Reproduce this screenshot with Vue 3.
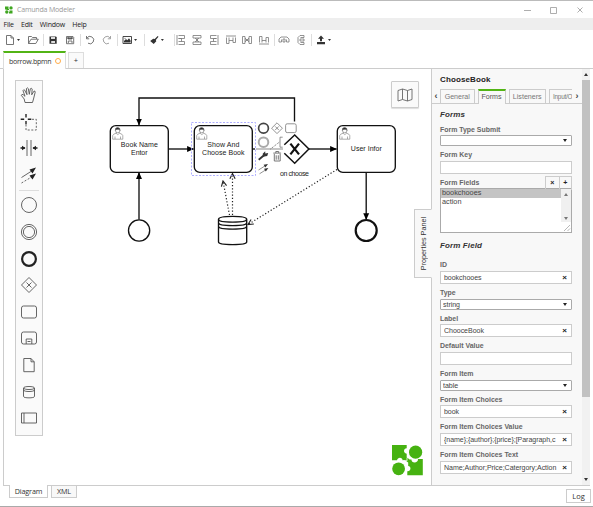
<script setup>
import { ref } from 'vue'

const menus = ['File', 'Edit', 'Window', 'Help']
const bars = {
  left: 'M2 1V11M3.5 1.5H9.5V4.5H3.5M3.5 7.5H9.5V10.5H3.5M3.5 4.5H6.5V7.5',
  center: 'M2 1.5H10V4H2ZM2 8H10V10.5H2ZM6 4V8M4 4L8 8M8 4L4 8',
  right: 'M10 1V11M8.5 1.5H2.5V4.5H8.5M8.5 7.5H2.5V10.5H8.5M8.5 4.5H5.5V7.5',
  top: 'M1 2H11M1.5 3.5V9.5H4V3.5M4 6.5H8M8 3.5V8.5H10.5V3.5',
  middle: 'M1.5 2.5V9.5H4V2.5ZM8 2.5V9.5H10.5V2.5ZM4 6H8M4 4L8 8M8 4L4 8',
  bottom: 'M1 10H11M1.5 8.5V2.5H4V8.5M4 6.5H8M8 8.5V3.5H10.5V8.5',
  spreadH: 'M1 8V5L3 3H9L11 5V8H8.5V5.5M3.5 8V5.5M1 8H3.5M5 8V5H7V8Z',
  spreadV: 'M9 1.5H5L3 3.5V8.5L5 10.5H9V8.5H5.5M9 3.5H5.5M9 1.5V3.5M9 5H5V7H9Z',
}
const aligns = ['left', 'center', 'right', 'top', 'middle', 'bottom']
const spreads = ['spreadH', 'spreadV']
const tabs = ['General', 'Forms', 'Listeners', 'Input/O']
const active = ref('Forms')
const selected = ref('bookchooes')
const fieldList = ['bookchooes', 'action']
const topFields = [
  { label: 'Form Type Submit', kind: 'select', value: '' },
  { label: 'Form Key', kind: 'text', value: '' },
]
const fields = [
  { label: 'ID', kind: 'text', value: 'bookchooes' },
  { label: 'Type', kind: 'select', value: 'string' },
  { label: 'Label', kind: 'text', value: 'ChooceBook' },
  { label: 'Default Value', kind: 'text', value: '' },
  { label: 'Form Item', kind: 'select', value: 'table' },
  { label: 'Form Item Choices', kind: 'text', value: 'book' },
  { label: 'Form Item Choices Value', kind: 'text', value: '{name};{author};{price};[Paragraph,c' },
  { label: 'Form Item Choices Text', kind: 'text', value: 'Name;Author;Price;Catergory;Action' },
]
const tasks = [
  { x: 110, lines: [['Book Name', 37], ['Entor', 16.5]] },
  { x: 194, lines: [['Show And', 32], ['Choose Book', 42.5]] },
  { x: 337, lines: [['User Infor', 31]] },
]
</script>

<template>
  <div class="window">
    <header class="titlebar">
      <svg class="app-logo" viewBox="0 0 8 8"><path d="M0 .5H3.5V3H4V4H2L1 3.5H0ZM4.4 4.5H7.5V7.6H4V6H4.5Z" /><circle cx="6" cy="1.9" r="1.7" /><circle cx="1.8" cy="6" r="1.7" /></svg>
      <span class="app-name">Camunda Modeler</span>
      <svg class="controls" viewBox="0 0 60 10"><path d="M0 5.5H7M26.5 2.5H32.5V8.5H26.5ZM53.5 2.5L58.5 7.5M58.5 2.5L53.5 7.5" /></svg>
    </header>
    <nav class="menubar"><span v-for="m in menus" :key="m">{{ m }}</span></nav>
    <div class="toolbar">
      <div class="group">
        <svg class="tool" viewBox="0 0 12 12"><path d="M2.5 1.5H7L9.5 4V10.5H2.5ZM7 1.5V4H9.5" /></svg>
        <i class="caret"></i>
        <svg class="tool gap" viewBox="0 0 12 12"><path d="M1.5 9.5V2.5H4.5L5.5 3.5H9.5V5M1.5 9.5L4 5.2H11.3L8.8 9.5Z" /></svg>
      </div>
      <div class="group">
        <svg class="tool dark" viewBox="0 0 12 12"><path class="fill" d="M2.5 2.5H9L9.7 3.2V9.7H2.5Z" /><path class="paper" d="M4 3H8V5H4ZM4.2 7H8V9H4.2Z" /></svg>
        <svg class="tool" viewBox="0 0 12 12"><path d="M2.5 2.5H9L9.7 3.2V9.7H2.5ZM4 3V5H8V3M4.3 9V7H8V9" /><path class="fill" d="M3.5 3.5H8.5V4.7H3.5Z" /></svg>
      </div>
      <div class="group">
        <svg class="tool" viewBox="0 0 12 12"><path d="M2.8 4.2A3.7 3.7 0 1 1 4 9.2M2.5 2V4.8H5.2" /></svg>
        <svg class="tool faded" viewBox="0 0 12 12"><path d="M9.2 4.2A3.7 3.7 0 1 0 8 9.2M9.5 2V4.8H6.8" /></svg>
      </div>
      <div class="group wide">
        <svg class="tool dark" viewBox="0 0 12 12"><path d="M2 2.5H10.5V9.5H2Z" /><path class="fill" d="M3 8.5V7L5 5L6.3 6.3L8 4.3L9.6 6.4V8.5Z" /><circle class="fill" cx="4" cy="4.3" r=".5" /></svg>
        <i class="caret"></i>
      </div>
      <div class="group wider">
        <svg class="tool dark" viewBox="0 0 12 12"><path class="fill" d="M9.7 2L10.5 2.8L7.8 6L8.3 7.2L5.7 10L2.2 7L5.2 4.7L6.7 5Z" /></svg>
        <i class="caret"></i>
      </div>
      <div class="group tight">
        <svg v-for="a in aligns" :key="a" class="tool thin" viewBox="0 0 12 12"><path :d="bars[a]" /></svg>
      </div>
      <div class="group">
        <svg v-for="a in spreads" :key="a" class="tool thin" viewBox="0 0 12 12"><path :d="bars[a]" /></svg>
      </div>
      <div class="group last">
        <svg class="tool dark" viewBox="0 0 12 12"><path class="fill" d="M6 1.5L9 4.8H7V7.2H5V4.8H3ZM2 8H10V10.2H2Z" /></svg>
        <i class="caret"></i>
      </div>
    </div>
    <div class="file-tabs">
      <div class="file-tab">borrow.bpmn<i class="dirty"></i></div>
      <div class="add-tab">+</div>
    </div>

    <main class="workspace">
      <section class="canvas">
        <svg class="diagram" viewBox="4 69 427 416">
          <defs>
            <marker id="solid" viewBox="0 0 8 8" refX="7.5" refY="4" markerWidth="6.8" markerHeight="6.8" markerUnits="userSpaceOnUse" orient="auto"><path d="M0 .5L8 4L0 7.5Z" /></marker>
            <marker id="open" viewBox="0 0 8 8" refX="7" refY="4" markerWidth="7" markerHeight="7" markerUnits="userSpaceOnUse" orient="auto"><path d="M1 1L7 4L1 7" fill="none" stroke="#222" stroke-width="1.3" /></marker>
          </defs>
          <g class="flow">
            <path d="M294.5 121.5V98H139V125" marker-end="url(#solid)" />
            <path d="M139 219.5V172.5" marker-end="url(#solid)" />
            <path d="M168.5 149H193.5" marker-end="url(#solid)" />
            <path d="M309 149H336.5" marker-end="url(#solid)" />
            <path d="M366.2 172.5V219.5" marker-end="url(#solid)" />
            <path class="pale" d="M256 149H283" />
            <path d="M252 149H255" />
          </g>
          <g class="assoc">
            <path d="M229.5 215L223 181" marker-end="url(#open)" />
            <path d="M232.5 215V173.5" marker-end="url(#open)" />
            <path d="M337 169.5L248 224.5" marker-end="url(#open)" />
          </g>
          <rect class="selection" x="191.5" y="122.5" width="64" height="53" />
          <g v-for="t in tasks" :key="t.x">
            <rect class="task" :x="t.x + .3" y="125.6" width="58" height="46.8" rx="5.5" />
            <g class="user" :transform="`translate(${t.x + 2} 127)`">
              <path d="M.7 12.2V8.6Q1.2 7 4 6.2Q6 9 7.5 6.2Q10.5 7 10.8 8.6V12.2ZM3 12V9.5M8.5 12V9.5M4 6.2L4.4 5.1M7.5 6.2L7 5.1" />
              <circle cx="5.7" cy="3.4" r="2.3" /><path class="hair" d="M3.4 3.5Q2.8 .7 5.5 .6Q8.5 .6 8 3.6L7.3 2.5L5.4 2.4L4.2 2.7Z" />
            </g>
            <text v-for="(l, i) in t.lines" :key="l[0]" class="label" :x="t.x + 29.3" :y="(t.lines.length > 1 ? 147.3 : 151.2) + i * 8" :textLength="l[1]">{{ l[0] }}</text>
          </g>
          <circle class="event" cx="139.1" cy="230.5" r="10.6" />
          <circle class="event end" cx="366.2" cy="230.5" r="10.5" />
          <path class="event" d="M218.5 219.2C218.5 215.4 246.7 215.4 246.7 219.2V242C246.7 245.5 218.5 245.5 218.5 242ZM218.5 219.2C218.5 223 246.7 223 246.7 219.2M218.5 222.8C218.5 226.6 246.7 226.6 246.7 222.8M218.5 226.3C218.5 230.1 246.7 230.1 246.7 226.3" />
          <path class="event gateway" d="M284.3 144.7L294.7 135L308.9 149L294.7 163.2L284.3 153.3" />
          <path class="cross" d="M290.4 143.6L299 154.4M299 143.6L290.4 154.4" />
          <text class="label" x="294.4" y="175.9" textLength="29">on choose</text>

          <g class="pad">
            <circle class="pad-end" cx="263.5" cy="128.3" r="4.9" />
            <path d="M277 122.8L282.4 128.2L277 133.6L271.6 128.2ZM275.2 126.4L278.8 130M278.8 126.4L275.2 130" />
            <rect x="285.6" y="123.8" width="10.6" height="8.8" rx="1.6" />
            <circle class="pad-mid" cx="263.5" cy="142.2" r="4.8" />
            <path d="M282.7 137.2H280V147.2H282.7" /><path class="dots" d="M270.5 149L279.5 142" />
            <path class="wrench" d="M258.7 159.8L264 155.2" /><path class="wrench-head" d="M263 156.8L262.7 153.7L265.2 151.3L265.3 153.5L268.2 153.1L267.2 156.1Z" />
            <path class="bin" d="M273.3 153.1H281.1M275.8 153V151.5H278.7V153M274.3 154V161H280.2V154M276.2 155.3V159.7M278.3 155.3V159.7" />
            <path d="M258.5 170L266.3 165.1M259.5 173.8L266.8 169.2" /><path class="wrench-head" d="M263.6 164.8L268 164L265.4 167.4ZM264 168.8L268.4 168L265.8 171.5Z" />
          </g>
          <g class="bpmn-logo">
            <path d="M392 445H406.7V448.2C403.7 448 402.7 453 406.7 453.7V457L409.5 459.5H411.5C411 463.5 418.5 463.5 418 459H422.8V475.2H407.3V471.2C411 471.5 411.7 466.5 408.2 466V462.5L405 460.3H402.5C403 457 397.4 456.5 397 460.3H392Z" />
            <circle cx="415.6" cy="452.2" r="6.6" /><circle cx="398.6" cy="468.8" r="6.4" />
          </g>
          <path class="logo-seam" d="M403 460.8H407V457.5H410" />
        </svg>

        <aside class="palette">
          <svg viewBox="0 0 20 20"><path d="M6 17.5L5.2 14L2.3 10.3Q2.7 8.8 4.2 9.7L6 11.3L4 5.6Q4.6 4.2 5.7 5.1L8 9.7L7.4 3.6Q8.5 2.1 9.3 3.6L10.3 9.3L11.3 3.8Q12.6 2.6 13.2 4.1L12.7 9.8L15 6.1Q16.4 5.8 16.2 7.2L14.5 14L13.5 17.5Z" /></svg>
          <svg viewBox="0 0 20 20"><path class="heavy" d="M7 2V5.5M7 9V12.5M1.7 7.3H5.2M8.8 7.3H12.3" /><path class="dash" d="M13 7.3H17.3V18H7V13" /></svg>
          <svg viewBox="0 0 20 20"><path d="M8 2V18M12 2V18" /><path class="heavy" d="M1.5 10H6M14 10H18.5" /><path class="solid" d="M3 7.7L6.5 10L3 12.3ZM17 7.7L13.5 10L17 12.3Z" /></svg>
          <svg viewBox="0 0 20 20"><path d="M2.5 12.5L13 5.8" /><path class="dash" d="M2.5 18L13 11.8" /><path class="solid" d="M10.5 4.5L17 2.5L13.5 8.6ZM10.5 10.5L17 8.5L13.5 14.5Z" /></svg>
          <hr />
          <svg viewBox="0 0 20 20"><circle cx="10" cy="10" r="7.5" /></svg>
          <svg viewBox="0 0 20 20"><circle cx="10" cy="10" r="7.6" /><circle cx="10" cy="10" r="5.6" /></svg>
          <svg viewBox="0 0 20 20"><circle class="ring" cx="10" cy="10" r="6.9" /></svg>
          <svg viewBox="0 0 20 20"><path d="M10 2.5L17.5 10L10 17.5L2.5 10ZM7.5 7.5L12.5 12.5M12.5 7.5L7.5 12.5" /></svg>
          <svg viewBox="0 0 20 20"><rect x="2.5" y="4" width="15" height="12" rx="2" /></svg>
          <svg viewBox="0 0 20 20"><rect x="2.5" y="4" width="15" height="12" rx="2" /><path d="M7.2 16V11H12.8V16M8.5 13.5H11.5" /></svg>
          <svg viewBox="0 0 20 20"><path d="M4.8 3.5H12L15.2 6.8V16.7H4.8ZM12 3.5V6.8H15.2" /></svg>
          <svg viewBox="0 0 20 20"><path d="M4.5 6C4.5 4 15.5 4 15.5 6V14.5C15.5 16.3 4.5 16.3 4.5 14.5ZM4.5 6C4.5 8 15.5 8 15.5 6M4.5 8C4.5 10 15.5 10 15.5 8" /></svg>
          <svg viewBox="0 0 20 20"><path d="M2.5 5H17.5V15H2.5ZM5 5V15" /></svg>
        </aside>
        <button class="minimap"><svg viewBox="0 0 16 14"><path d="M1 2.5L5.5 1L10.5 2.5L15 1V11.5L10.5 13L5.5 11.5L1 13ZM5.5 1V11.5M10.5 2.5V13" /></svg></button>
        <div class="panel-toggle"><span>Properties Panel</span></div>
      </section>

      <aside class="panel">
        <div class="panel-body">
          <h1>ChooseBook</h1>
          <div class="tabs">
            <span class="scroll prev">‹</span>
            <button v-for="t in tabs" :key="t" class="tab" :class="{ active: t === active }" @click="active = t">{{ t }}</button>
            <span class="scroll next">›</span>
          </div>
          <div class="form">
            <h2>Forms</h2>
            <div v-for="f in topFields" :key="f.label" class="field" :class="f.kind">
              <label>{{ f.label }}</label>
              <div class="control"><span class="value">{{ f.value }}</span></div>
            </div>
            <div class="list-head"><label>Form Fields</label><b>×</b><b>+</b></div>
            <div class="list">
              <div class="options"><div v-for="o in fieldList" :key="o" :class="{ chosen: o === selected }" @click="selected = o">{{ o }}</div></div>
              <div class="mini-scroll"><i class="up"></i><i class="down"></i><svg viewBox="0 0 10 10"><path d="M3 9L9 3M6.5 9L9 6.5" /></svg></div>
            </div>
            <h2 class="second">Form Field</h2>
            <div v-for="f in fields" :key="f.label" class="field" :class="f.kind">
              <label>{{ f.label }}</label>
              <div class="control"><span class="value">{{ f.value }}</span><b v-if="f.kind === 'text' && f.value">×</b></div>
            </div>
          </div>
        </div>
        <div class="scrollbar"><i class="up"></i><div class="thumb"></div><i class="down"></i></div>
      </aside>
    </main>
    <footer class="footer">
      <span class="view current">Diagram</span><span class="view">XML</span><button class="log">Log</button>
    </footer>
  </div>
</template>

<style>
body { margin: 0; overflow: hidden; background: #fff; }
</style>
<style scoped>
* { box-sizing: border-box; }
button { margin: 0; padding: 0; font: inherit; color: inherit; }
svg { display: block; flex: none; }
.window { width: 593px; height: 507px; display: flex; flex-direction: column; background: #fff; border-top: 1px solid #bbb; border-bottom: 1px solid #aaa; font: 7.5px "Open Sans", sans-serif; color: #333; overflow: hidden; }
.titlebar { height: 17px; flex: none; display: flex; align-items: center; padding: 0 9px 0 5px; }
.app-logo { width: 8px; height: 8px; fill: #3fa620; margin-right: 4px; }
.app-name { font-size: 7px; color: #999; letter-spacing: -.18px; }
.controls { width: 60px; height: 10px; margin-left: auto; fill: none; stroke: #999; stroke-width: .8; }
.menubar { height: 12px; flex: none; display: flex; gap: 7.2px; align-items: center; padding-left: 3.5px; background: #eee; font-size: 7px; letter-spacing: -.2px; color: #222; }
.toolbar { height: 20px; flex: none; display: flex; align-items: center; padding-left: 4px; }
.group { height: 12px; display: flex; align-items: center; gap: 4.6px; padding-right: 4px; margin-right: 3.3px; border-right: 1px solid #ddd; }
.group .caret { margin-left: -3.6px; margin-right: 1px; }
.group.wide { padding-right: 5.5px; } .group.wider { padding-right: 9px; margin-right: 0; } .group.last { border: 0; }
.gap { margin-left: 1.4px; }
.tool { width: 12px; height: 12px; fill: none; stroke: #666; stroke-width: .9; }
.tool.dark { stroke: #333; } .tool.faded { stroke: #999; } .tool.thin { stroke: #777; stroke-width: .8; }
.tool .fill { fill: #333; stroke: none; } .tool .paper { fill: #ddd; stroke: none; }
.caret { width: 3px; height: 2px; background: #333; clip-path: polygon(0 0, 100% 0, 50% 100%); }
.file-tabs { height: 19px; flex: none; display: flex; align-items: flex-end; padding-left: 3px; border-bottom: 1px solid #ccc; }
.file-tab { height: 18px; width: 63px; margin-bottom: -1px; background: #fff; border: 1px solid #ddd; border-top: 2px solid #52b415; border-bottom: 0; padding: 0 0 0 5px; display: flex; align-items: center; font-size: 7px; letter-spacing: -.25px; }
.dirty { width: 6px; height: 6px; border: 1px solid #ffad4a; border-radius: 50%; margin-left: 4px; }
.add-tab { height: 16px; width: 16px; margin-left: 2px; border: 1px solid #ddd; border-bottom: 0; background: #fafafa; text-align: center; line-height: 15px; }
.workspace { height: 417px; flex: none; display: flex; margin: 0 3px; border-left: 1px solid #ccc; border-bottom: 1px solid #ccc; }
.canvas { width: 427px; position: relative; flex: none; }
.diagram { width: 427px; height: 416px; }
.flow path, .event, .task { fill: none; stroke: #111; stroke-width: 1.35; }
.flow .pale { stroke: #aaa; }
.assoc path { fill: none; stroke: #222; stroke-width: 1.2; stroke-dasharray: 1.2 2; }
.selection { fill: none; stroke: #99f; stroke-width: .8; stroke-dasharray: 2 1.5; }
.task { fill: #fff; }
.event.end { stroke-width: 2.2; } .event.gateway { stroke-width: 1.5; }
.cross { stroke: #111; stroke-width: 2.2; }
.user { fill: none; stroke: #777; stroke-width: .6; } .hair { fill: #222; }
.label { font: 7px "Liberation Sans", sans-serif; fill: #222; text-anchor: middle; }
.pad { fill: none; stroke: #777; stroke-width: .8; }
.pad-end { stroke: #444; stroke-width: 1.7; } .pad-mid { stroke: #aaa; stroke-width: 2; }
.dots { stroke-dasharray: 1 1; stroke: #444; }
.wrench { stroke: #333; stroke-width: 1.8; } .wrench-head { fill: #333; stroke: none; } .bin { stroke-width: 1; }
.bpmn-logo { fill: #46b211; }
.logo-seam { fill: none; stroke: #fff; stroke-width: .8; }
.palette { position: absolute; left: 11px; top: 11px; width: 28px; height: 356px; border: 1px solid #ccc; background: #fafafa; padding-top: 1px; }
.palette svg { width: 20px; height: 20px; margin: 3px 3px 6.6px; fill: none; stroke: #555; stroke-width: .9; }
.palette hr { border: 0; border-top: 1px solid #ddd; margin: -1px 3px 0; height: 1px; }
.palette svg + svg { margin-top: 0; }
.palette hr + svg { margin-top: 4px; }
.palette .heavy { stroke: #222; stroke-width: 1.4; } .palette .dash { stroke-dasharray: 2 1.6; }
.palette .solid { fill: #222; stroke: none; } .palette .ring { stroke: #222; stroke-width: 2.2; }
.minimap { position: absolute; left: 387px; top: 12px; width: 28px; height: 27px; display: flex; align-items: center; justify-content: center; background: #fafafa; border: 1px solid #ccc; border-radius: 1px; box-shadow: 0 1px 1px #ddd; }
.minimap svg { width: 16px; height: 14px; fill: none; stroke: #666; stroke-width: .9; }
.panel-toggle { position: absolute; left: 410px; top: 140px; width: 18px; height: 69px; z-index: 2; background: #f8f8f8; border: 1px solid #ccc; border-right-color: #f8f8f8; display: flex; align-items: center; justify-content: center; }
.panel-toggle span { writing-mode: vertical-rl; transform: rotate(180deg); white-space: nowrap; font: 7.2px "Liberation Sans", sans-serif; }
.panel { width: 159px; flex: none; display: flex; background: #f8f8f8; border-left: 1px solid #ccc; font: 7.05px "Liberation Sans", sans-serif; color: #444; }
.panel-body { width: 150px; flex: none; overflow: hidden; }
h1 { margin: 4px 0 0 8px; font: bold 8px/13px "Liberation Sans", sans-serif; letter-spacing: .12px; color: #222; }
.tabs { height: 18px; display: flex; align-items: flex-end; border-bottom: 1px solid #ccc; }
.scroll { font: bold 9px/14px "Liberation Sans", sans-serif; width: 8px; flex: none; text-align: center; height: 14px; }
.scroll.next { width: 10px; }
.tab { height: 14px; flex: none; margin-right: 3px; border: 1px solid #ccc; border-bottom: 0; background: #f8f8f8; color: #777; font-size: 7.1px; width: 34.5px; overflow: hidden; white-space: nowrap; }
.tab.active { width: 28px; height: 15px; border-top: 2px solid #52b415; margin-bottom: -1px; padding-bottom: 2px; color: #555; }
.tab:nth-of-type(3) { width: 37.5px; }
.tab:nth-of-type(4) { width: 23px; border-right: 0; text-align: left; padding-left: 3px; margin-right: 0; font-size: 6.4px; letter-spacing: -.25px; }
.form { width: 132px; margin-left: 8px; padding-top: 5px; }
h2 { margin: 0; height: 15px; font: italic bold 8px/12px "Liberation Sans", sans-serif; letter-spacing: .12px; color: #333; }
.field { height: 27.8px; } .field.select { height: 25.4px; }
label { display: block; height: 11.4px; line-height: 11.4px; font-weight: bold; font-size: 6.95px; color: #666; white-space: nowrap; }
.control { height: 13px; border: 1px solid #ccc; background: #fff; display: flex; align-items: center; padding: 0 3px 0 3px; line-height: 11px; }
.value { width: 113px; overflow: hidden; white-space: nowrap; letter-spacing: -.05px; }
.control b { margin-left: auto; width: 7px; text-align: center; color: #222; font-size: 8px; }
.select .control { height: 11px; border-color: #aaa; padding-left: 2px; line-height: 9px; border-radius: 1px; }
.select .control::after { content: ""; margin-left: auto; margin-right: 1px; border: 2px solid transparent; border-top: 3.5px solid #222; border-bottom: 0; }
.list-head { display: flex; height: 11.3px; margin-top: -.2px; }
.list-head label { flex: 1; }
.list-head b { width: 13.5px; height: 14px; margin-top: -1px; border: 1px solid #ccc; border-right: 0; text-align: center; line-height: 12px; color: #222; }
.list-head b:last-child { border-right: 1px solid #ccc; }
.list { height: 45px; display: flex; border: 1px solid #aaa; background: #fff; }
.options { flex: 1; font-size: 7.3px; } .options div { height: 8.6px; line-height: 8.6px; padding-left: 1px; }
.options .chosen { background: #c4c4c4; }
.mini-scroll { width: 10px; background: #f0f0f0; display: flex; flex-direction: column; justify-content: space-between; align-items: center; padding-top: 4px; }
.mini-scroll svg { width: 10px; height: 10px; background: #fff; stroke: #999; stroke-width: .7; }
.mini-scroll .down { margin-top: 18px; }
.up, .down { border: 2px solid transparent; border-top: 0; border-bottom: 3px solid #777; }
.down { border-bottom: 0; border-top: 3px solid #777; }
h2.second { height: 26.2px; padding-top: 7px; }
.scrollbar { width: 8px; display: flex; flex-direction: column; align-items: center; background: #f1f1f1; padding: 4px 0; }
.scrollbar .thumb { width: 8px; height: 317px; margin-top: 4px; background: #c1c1c1; }
.scrollbar .down { margin-top: auto; } .scrollbar .up, .scrollbar .down { border-top-color: #333; border-bottom-color: #333; }
.scrollbar .up { border-top: 0; }
.footer { height: 19px; display: flex; align-items: flex-start; padding-left: 9px; }
.view { height: 12px; width: 26px; line-height: 11px; text-align: center; border: 1px solid #ccc; border-top: 0; background: #f8f8f8; margin-right: 3px; font-size: 7.2px; letter-spacing: -.15px; }
.view.current { width: 39px; height: 13px; margin-top: -1px; line-height: 13px; background: #fff; }
.log { width: 25px; height: 14px; margin: 3px 2px 0 auto; border: 1px solid #ccc; background: #fff; font-size: 7.5px; line-height: 11px; }
</style>
